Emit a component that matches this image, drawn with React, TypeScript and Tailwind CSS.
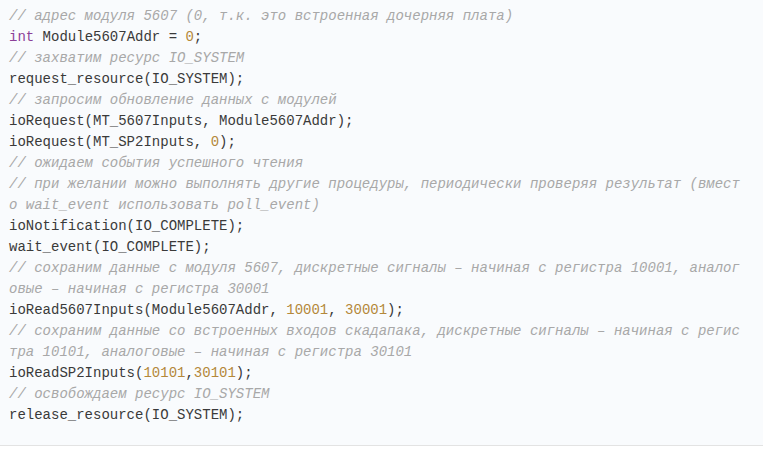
type Tok = { t: string; k?: 'c' | 'n' | 'kw' };

const lines: Tok[][] = [
  [{ t: '// адрес модуля 5607 (0, т.к. это встроенная дочерняя плата)', k: 'c' }],
  [{ t: 'int', k: 'kw' }, { t: ' Module5607Addr = ' }, { t: '0', k: 'n' }, { t: ';' }],
  [{ t: '// захватим ресурс IO_SYSTEM', k: 'c' }],
  [{ t: 'request_resource(IO_SYSTEM);' }],
  [{ t: '// запросим обновление данных с модулей', k: 'c' }],
  [{ t: 'ioRequest(MT_5607Inputs, Module5607Addr);' }],
  [{ t: 'ioRequest(MT_SP2Inputs, ' }, { t: '0', k: 'n' }, { t: ');' }],
  [{ t: '// ожидаем события успешного чтения', k: 'c' }],
  [{ t: '// при желании можно выполнять другие процедуры, периодически проверяя результат (вмест', k: 'c' }],
  [{ t: 'о wait_event использовать poll_event)', k: 'c' }],
  [{ t: 'ioNotification(IO_COMPLETE);' }],
  [{ t: 'wait_event(IO_COMPLETE);' }],
  [{ t: '// сохраним данные с модуля 5607, дискретные сигналы – начиная с регистра 10001, аналог', k: 'c' }],
  [{ t: 'овые – начиная с регистра 30001', k: 'c' }],
  [{ t: 'ioRead5607Inputs(Module5607Addr, ' }, { t: '10001', k: 'n' }, { t: ', ' }, { t: '30001', k: 'n' }, { t: ');' }],
  [{ t: '// сохраним данные со встроенных входов скадапака, дискретные сигналы – начиная с регис', k: 'c' }],
  [{ t: 'тра 10101, аналоговые – начиная с регистра 30101', k: 'c' }],
  [{ t: 'ioReadSP2Inputs(' }, { t: '10101', k: 'n' }, { t: ',' }, { t: '30101', k: 'n' }, { t: ');' }],
  [{ t: '// освобождаем ресурс IO_SYSTEM', k: 'c' }],
  [{ t: 'release_resource(IO_SYSTEM);' }],
];

const cls = (k?: Tok['k']) =>
  k === 'c' ? 'italic text-[#a8a8a8]' : k === 'n' ? 'text-[#b4883a]' : k === 'kw' ? 'text-[#8b3f98]' : '';

export default function App() {
  return (
    <div className="w-[763px] h-[449px] bg-white">
      <pre className="bg-[#f9fbfd] border-b border-[#e3e3e3] pt-[6px] pb-[19px] pl-[9px] text-[14px] leading-[21px] text-[#3a3a3a] font-['Courier_New','Nimbus_Mono_PS','FreeMono','Liberation_Mono',monospace] whitespace-pre">
        {lines.map((ln, i) => (
          <div key={i}>
            {ln.map((tok, j) => (
              <span key={j} className={cls(tok.k)}>
                {tok.t}
              </span>
            ))}
          </div>
        ))}
      </pre>
    </div>
  );
}
